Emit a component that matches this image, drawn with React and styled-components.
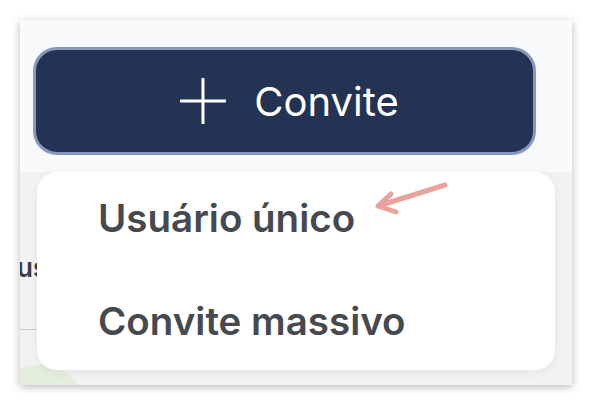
import styled, { createGlobalStyle } from "styled-components";

const GlobalStyle = createGlobalStyle`
    body {
        margin: 0;
        background: #ffffff;
        font-family: Inter, "Noto Sans", sans-serif;
    }
`

function PlusIcon() {
    return (
        <svg width="46" height="46" viewBox="0 0 46 46" fill="none">
            <path d="M23 1v44M1 23h44" stroke="#ffffff" strokeWidth="3" strokeLinecap="round" />
        </svg>
    )
}

function Arrow() {
    return (
        <svg width="80" height="40" viewBox="0 0 80 40" fill="none">
            <path d="M75 5 L8 26 M8 26 L21 14 M8 26 L26 32" stroke="#e9a39c" strokeWidth="5" strokeLinecap="round" strokeLinejoin="round" />
        </svg>
    )
}

export default function App() {
    return (
        <Page>
            <GlobalStyle />
            <Panel>
                <InviteButton>
                    <PlusIcon />
                    <span>Convite</span>
                </InviteButton>
                <Behind>
                    <PeekText>us</PeekText>
                    <PeekLine />
                    <PeekBlob />
                    <Menu>
                        <MenuItem>
                            Usuário único
                            <ArrowMark><Arrow /></ArrowMark>
                        </MenuItem>
                        <MenuItem>Convite massivo</MenuItem>
                    </Menu>
                </Behind>
            </Panel>
        </Page>
    )
}

const Page = styled.div`
    width: 592px;
    height: 404px;
    box-sizing: border-box;
    padding: 20px;
    overflow: hidden;
`
const Panel = styled.div`
    width: 552px;
    height: 365px;
    display: flex;
    flex-direction: column;
    background-color: #f9fafc;
    box-shadow: 0 2px 8px rgba(0,0,0,0.28);
    overflow: hidden;
`
const InviteButton = styled.button`
    margin: 27px 0 0 13px;
    width: 503px;
    height: 108px;
    box-sizing: border-box;
    display: flex;
    align-items: center;
    justify-content: center;
    gap: 28px;
    border: 3px solid #8797bf;
    border-radius: 24px;
    background-color: #243354;
    color: #ffffff;
    font-family: Inter, "Noto Sans", sans-serif;
    font-size: 40px;
    font-weight: 400;
    padding: 0 0 0 10px;
    span{
        line-height: 1;
        margin-top: 2px;
    }
`
const Behind = styled.div`
    position: relative;
    flex: 1;
    margin-top: 17px;
    background-color: #f1f2f4;
`
const PeekText = styled.div`
    position: absolute;
    left: -3px;
    top: 80px;
    font-family: Inter, "Noto Sans", sans-serif;
    font-size: 26px;
    font-weight: 600;
    color: #3c3f44;
`
const PeekLine = styled.div`
    position: absolute;
    left: 0;
    top: 157px;
    width: 40px;
    height: 1px;
    background-color: #c9cbcf;
`
const PeekBlob = styled.div`
    position: absolute;
    left: -20px;
    bottom: -40px;
    width: 80px;
    height: 60px;
    border-radius: 50%;
    background-color: #e3eedd;
`
const Menu = styled.div`
    position: absolute;
    left: 17px;
    top: 0;
    width: 518px;
    height: 198px;
    box-sizing: border-box;
    padding: 21px 0 0 61px;
    display: flex;
    flex-direction: column;
    gap: 53px;
    background-color: #ffffff;
    border-radius: 20px;
    box-shadow: 0 2px 12px rgba(0,0,0,0.06);
`
const MenuItem = styled.div`
    position: relative;
    font-family: Inter, "Noto Sans", sans-serif;
    font-size: 38.5px;
    font-weight: 600;
    line-height: 50px;
    color: #46494e;
    width: fit-content;
`
const ArrowMark = styled.div`
    position: absolute;
    left: calc(100% + 15px);
    top: -13px;
`
